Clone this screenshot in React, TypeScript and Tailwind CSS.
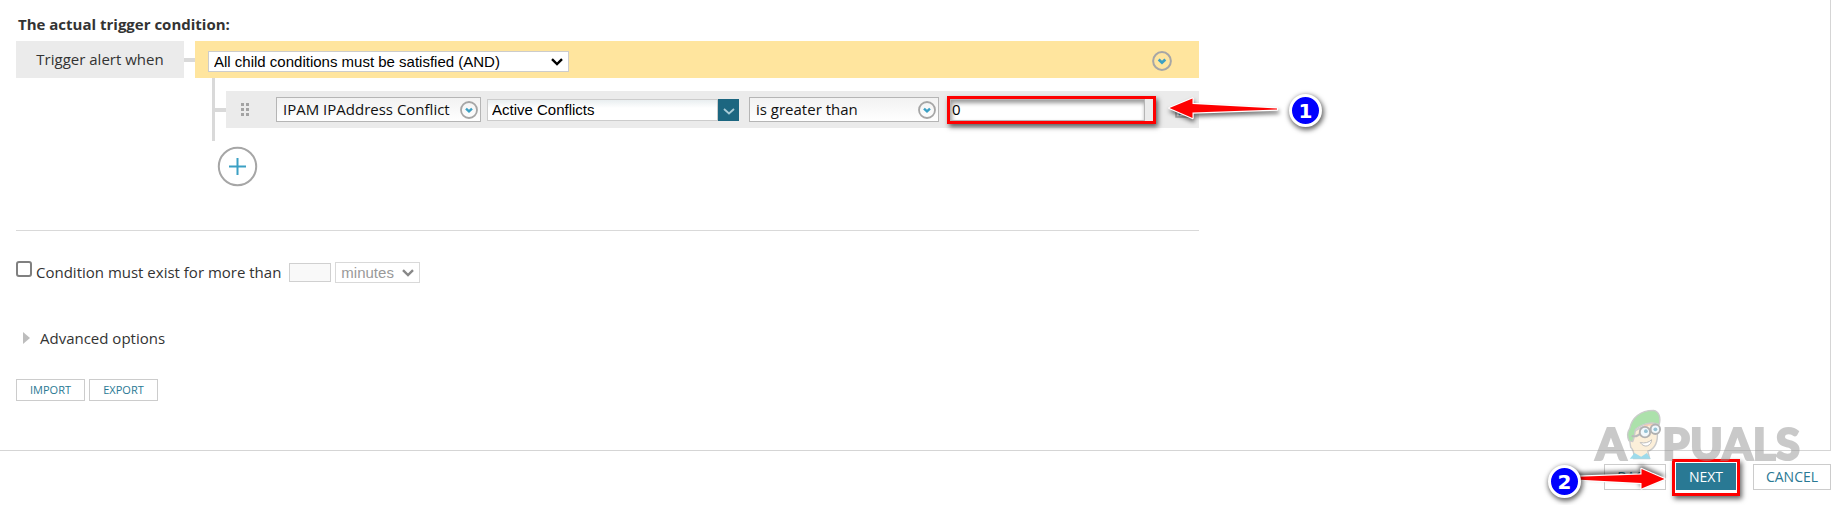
import { useState } from "react";
import type { ReactNode } from "react";

function CircleChevron({ size = 18 }: { size?: number }) {
  return (
    <svg width={size} height={size} viewBox="0 0 18 18" fill="none" aria-hidden="true">
      <circle cx="9" cy="9" r="8" stroke="#a6a6a6" strokeWidth="1.8" />
      <path d="M6 7.6 9 10.4 12 7.6" stroke="#3ba0c4" strokeWidth="2.4" />
    </svg>
  );
}

function SelectChevron({ className }: { className: string }) {
  return (
    <svg
      width="12"
      height="8"
      viewBox="0 0 12 8"
      fill="none"
      aria-hidden="true"
      className={`pointer-events-none absolute right-[6px] top-1/2 -translate-y-1/2 ${className}`}
    >
      <path d="M1 1.2 6 6 11 1.2" stroke="currentColor" strokeWidth="2.4" />
    </svg>
  );
}

function FieldButton({ className, children }: { className: string; children: ReactNode }) {
  return (
    <button
      type="button"
      className={`flex h-[25px] items-center justify-between border border-[#b5b5b5] bg-linear-to-b from-[#f2f2f2] to-white pr-[2px] pl-[6px] text-[15px] leading-5 text-[#111] ${className}`}
    >
      <span className="pb-[2px]">{children}</span>
      <CircleChevron />
    </button>
  );
}

function StepBadge({ step, className }: { step: number; className: string }) {
  return (
    <span
      className={`absolute flex size-[33px] items-center justify-center rounded-full border-[3px] border-white bg-[#0000fe] font-['DejaVu_Sans','Open_Sans',sans-serif] text-[20px] leading-6 font-bold text-white shadow-[1px_2px_5px_1px_rgba(0,0,0,0.6)] ${className}`}
    >
      {step}
    </span>
  );
}

function Arrow({ className }: { className: string }) {
  return (
    <svg
      width="116"
      height="36"
      viewBox="0 0 116 36"
      aria-hidden="true"
      className={`absolute overflow-visible drop-shadow-[1px_3px_2px_rgba(0,0,0,0.55)] ${className}`}
    >
      <path
        d="M4.5 17 27.5 7.5V13L112 17.5V18.5L27.5 21.5V27Z"
        fill="#fe0000"
        stroke="#fff"
        strokeWidth="2.4"
        strokeLinejoin="round"
        paintOrder="stroke"
      />
    </svg>
  );
}

function Watermark() {
  return (
    <div className="pointer-events-none absolute right-[31px] bottom-[45px] flex items-end font-['Lato',sans-serif] text-[44px] leading-[34px] font-black text-[#959595] opacity-50 [-webkit-text-stroke:2px_#959595]">
      <span>A</span>
      <svg width="36" height="51" viewBox="0 0 38 53" fill="none" aria-hidden="true">
        <path
          d="M8 52C9 47 8 43 5 40L3 27 14 20 29 13 33 24C34 33 31 42 23 44L25 52Z"
          fill="#fbe0b4"
          stroke="#999"
          strokeWidth="1.5"
          strokeLinejoin="round"
        />
        <path d="M4 52 9 46 16 50 22 46 26 52Z" fill="#3fb8d8" />
        <path d="M19 16 30 11 31 18 24 17 18 21Z" fill="#f0a070" />
        <path
          d="M3 33C1 28 1 24 4 20 6 9 15 1 29 1 35 2 37 9 35 16 26 12 18 15 10 21 9 26 9 30 7 34Z"
          fill="#5cc45a"
          stroke="#999"
          strokeWidth="1.5"
          strokeLinejoin="round"
        />
        <path d="M6 28Q12 30 16 24" stroke="#777" strokeWidth="2" />
        <g fill="#e4f3fa" stroke="#666" strokeWidth="2">
          <circle cx="20" cy="24" r="5.5" />
          <circle cx="31" cy="21" r="5" />
        </g>
        <g fill="#2e86ab">
          <circle cx="21" cy="23" r="2" />
          <circle cx="31" cy="21" r="2" />
        </g>
        <path d="M15 35C20 36 24 35 27 32 27 38 20 42 15 35Z" fill="#fff" stroke="#777" />
      </svg>
      <span>PUALS</span>
    </div>
  );
}

export default function App() {
  const [scope, setScope] = useState("and");
  const [field, setField] = useState("Active Conflicts");
  const [value, setValue] = useState("0");
  const [sustained, setSustained] = useState(false);

  return (
    <div className="bg-white pr-[9px] font-['Open_Sans',sans-serif] text-[15px] leading-5 text-[#333]">
      <main className="border-r border-b border-[#d5d5d5] pt-[14px] pb-[49px] pl-4">
        <div className="max-w-[1183px]">
          <h1 className="pl-[2px] text-[15px] leading-5 font-bold">The actual trigger condition:</h1>

          <div className="mt-[7px] flex items-start">
            <div className="flex h-[37px] w-[168px] items-center justify-center bg-[#ebebeb] pb-[2px]">
              Trigger alert when
            </div>
            <div className="mt-[17px] h-1 w-[11px] bg-[#d9d9d9]" />

            <div className="flex-1">
              <div className="flex h-[37px] items-center justify-between bg-[#ffe59e] pr-[27px] pl-[13px]">
                <div className="relative mt-[4px] w-[361px]">
                  <select
                    aria-label="Condition scope"
                    value={scope}
                    onChange={(e) => setScope(e.target.value)}
                    className="block h-[21px] w-full appearance-none border border-[#ccc] bg-white pl-[5px] font-['Liberation_Sans',sans-serif] text-[15px] leading-[19px] text-black"
                  >
                    <option value="and">All child conditions must be satisfied (AND)</option>
                    <option value="or">At least one child condition must be satisfied (OR)</option>
                  </select>
                  <SelectChevron className="text-black" />
                </div>
                <button type="button" aria-label="Group options" className="mt-[2px]">
                  <CircleChevron size={20} />
                </button>
              </div>

              <div className="ml-[17px] flex h-[63px] items-start border-l-[3px] border-[#d9d9d9] pt-[13px]">
                <div className="mt-[17px] h-1 w-[11px] bg-[#d9d9d9]" />
                <div className="relative flex h-[37px] flex-1 items-center bg-[#ebebeb] pl-[15px]">
                  <button type="button" aria-label="Drag condition" className="mr-[27px]">
                    <svg width="8" height="13" viewBox="0 0 8 13" fill="#a3a3a3" aria-hidden="true">
                      <path d="M0 0h3v3H0zM5 0h3v3H5zM0 5h3v3H0zM5 5h3v3H5zM0 10h3v3H0zM5 10h3v3H5z" />
                    </svg>
                  </button>
                  <FieldButton className="w-[205px]">IPAM IPAddress Conflict</FieldButton>

                  <div className="ml-[6px] flex h-[22px] w-[252px]">
                    <input
                      aria-label="Field"
                      value={field}
                      onChange={(e) => setField(e.target.value)}
                      className="min-w-0 flex-1 border border-[#ccc] bg-linear-to-b from-[#e9eef0] to-white to-40% pl-1 font-['Liberation_Sans',sans-serif] text-[15px] leading-5 text-black"
                    />
                    <button
                      type="button"
                      aria-label="Choose field"
                      className="flex w-[21px] items-center justify-center bg-[#1c6680] pt-1"
                    >
                      <svg width="12" height="7" viewBox="0 0 12 7" fill="none" aria-hidden="true">
                        <path d="M1 1 6 5.5 11 1" stroke="#a8cbd6" strokeWidth="1.8" />
                      </svg>
                    </button>
                  </div>

                  <FieldButton className="ml-[10px] w-[190px]">is greater than</FieldButton>

                  <div className="ml-2 border-[3px] border-[#fe0000] shadow-[2px_3px_5px_rgba(0,0,0,0.6)]">
                    <div className="w-[203px] bg-[#ebebeb] pr-2">
                      <input
                        aria-label="Value"
                        value={value}
                        onChange={(e) => setValue(e.target.value)}
                        className="block h-[22px] w-full border border-[#b5b5b5] bg-white pb-[2px] pl-px text-[15px] leading-5 text-black shadow-[inset_1px_3px_4px_rgba(0,0,0,0.4)]"
                      />
                    </div>
                  </div>

                  <button type="button" aria-label="Remove condition" className="mt-1 ml-[19px]">
                    <svg width="14" height="12" viewBox="0 0 14 12" fill="none" aria-hidden="true">
                      <path d="M1 1h12v10H1z" stroke="#a6a6a6" strokeWidth="1.5" />
                      <path d="M4 9 10 3M4 3l6 6" stroke="#3ba0c4" strokeWidth="1.5" />
                    </svg>
                  </button>
                  <Arrow className="top-0 left-[939px]" />
                  <StepBadge step={1} className="top-[3px] left-[1063px]" />
                </div>
              </div>

              <button type="button" aria-label="Add condition" className="mt-[5px] ml-[22px] block">
                <svg width="41" height="41" viewBox="0 0 41 41" fill="none" aria-hidden="true">
                  <circle cx="20.5" cy="20.5" r="18.7" stroke="#a6a6a6" strokeWidth="2" />
                  <path d="M20.5 12v17M12 20.5h17" stroke="#3ba0c4" strokeWidth="2" />
                </svg>
              </button>
            </div>
          </div>

          <hr className="mt-[43px] border-[#d9d9d9]" />

          <div className="mt-[31px] flex h-[21px] items-center">
            <input
              id="sustained"
              type="checkbox"
              checked={sustained}
              onChange={(e) => setSustained(e.target.checked)}
              className="mb-[7px] size-4 appearance-none rounded-[3px] border-2 border-[#808080] bg-white checked:bg-[#1c6680]"
            />
            <label htmlFor="sustained" className="ml-1 pb-[2px]">
              Condition must exist for more than
            </label>
            <input
              aria-label="Duration"
              disabled={!sustained}
              className="ml-2 h-[19px] w-[42px] border border-[#d0d0d0] bg-[#f9f9f9] px-1"
            />
            <div className="relative ml-1 w-[85px]">
              <select
                aria-label="Duration unit"
                disabled={!sustained}
                className="block h-[21px] w-full appearance-none border border-[#d9d9d9] bg-white pl-[5px] font-['Liberation_Sans',sans-serif] text-[15px] leading-[19px] text-[#999]"
              >
                <option>minutes</option>
                <option>hours</option>
              </select>
              <SelectChevron className="text-[#888]" />
            </div>
          </div>

          <button type="button" className="mt-[45px] flex items-center pl-[7px]">
            <svg width="7" height="12" viewBox="0 0 7 12" fill="#bdbdbd" aria-hidden="true">
              <path d="M0 0 7 6 0 12Z" />
            </svg>
            <span className="ml-[10px]">Advanced options</span>
          </button>

          <div className="mt-[31px] flex gap-1 text-[11px] leading-5 text-[#297994]">
            <button type="button" className="h-[22px] w-[69px] border border-[#ccc]">
              IMPORT
            </button>
            <button type="button" className="h-[22px] w-[69px] border border-[#ccc]">
              EXPORT
            </button>
          </div>
        </div>
      </main>

      <footer className="relative flex items-start justify-end pt-2 pb-[9px] text-[14px] leading-5 text-[#297994]">
        <button type="button" className="mt-[5px] h-[26px] w-[62px] border border-[#ccc]">
          BACK
        </button>
        <div className="ml-[6px] border-[3px] border-[#fe0000] p-px pb-[3px] shadow-[2px_3px_5px_rgba(0,0,0,0.6)]">
          <button type="button" className="block h-[27px] w-[60px] bg-[#297994] text-white">
            NEXT
          </button>
        </div>
        <button type="button" className="mt-[5px] ml-[13px] h-[26px] w-[78px] border border-[#ccc]">
          CANCEL
        </button>
        <Watermark />
        <Arrow className="top-[9px] right-[162px] rotate-180" />
        <StepBadge step={2} className="top-[14px] right-[250px]" />
      </footer>
    </div>
  );
}
